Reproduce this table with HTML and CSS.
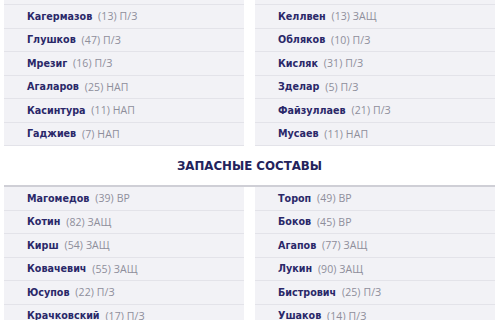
FILE: index.html
```html
<!DOCTYPE html>
<html lang="ru">
<head>
<meta charset="utf-8">
<link rel="stylesheet" href="styles.css">
</head>
<body>
<div class="page">
  <div class="teams">
    <div class="team">
      <div class="stub"></div>
      <div class="row"><b>Кагермазов</b> (13) П/З</div>
      <div class="row"><b>Глушков</b> (47) П/З</div>
      <div class="row"><b>Мрезиг</b> (16) П/З</div>
      <div class="row"><b>Агаларов</b> (25) НАП</div>
      <div class="row"><b>Касинтура</b> (11) НАП</div>
      <div class="row"><b>Гаджиев</b> (7) НАП</div>
    </div>
    <div class="team">
      <div class="stub"></div>
      <div class="row"><b>Келлвен</b> (13) ЗАЩ</div>
      <div class="row"><b>Обляков</b> (10) П/З</div>
      <div class="row"><b>Кисляк</b> (31) П/З</div>
      <div class="row"><b>Зделар</b> (5) П/З</div>
      <div class="row"><b>Файзуллаев</b> (21) П/З</div>
      <div class="row"><b>Мусаев</b> (11) НАП</div>
    </div>
  </div>
  <h2 class="title">ЗАПАСНЫЕ СОСТАВЫ</h2>
  <div class="teams subs">
    <div class="team">
      <div class="row"><b>Магомедов</b> (39) ВР</div>
      <div class="row"><b>Котин</b> (82) ЗАЩ</div>
      <div class="row"><b>Кирш</b> (54) ЗАЩ</div>
      <div class="row"><b>Ковачевич</b> (55) ЗАЩ</div>
      <div class="row"><b>Юсупов</b> (22) П/З</div>
      <div class="row"><b>Крачковский</b> (17) П/З</div>
    </div>
    <div class="team">
      <div class="row"><b>Тороп</b> (49) ВР</div>
      <div class="row"><b>Боков</b> (45) ВР</div>
      <div class="row"><b>Агапов</b> (77) ЗАЩ</div>
      <div class="row"><b>Лукин</b> (90) ЗАЩ</div>
      <div class="row"><b>Бистрович</b> (25) П/З</div>
      <div class="row"><b>Ушаков</b> (14) П/З</div>
    </div>
  </div>
</div>
</body>
</html>
```
FILE: styles.css
```css
html, body {
  margin: 0;
  padding: 0;
  background: #ffffff;
  overflow: hidden;
}
.page {
  width: 500px;
  height: 320px;
  padding: 0 5px 0 4px;
  box-sizing: border-box;
  font-family: "Open Sans", sans-serif;
}
.teams {
  display: grid;
  grid-template-columns: 1fr 1fr;
  column-gap: 11px;
}
.team {
  display: flex;
  flex-direction: column;
}
.stub {
  height: 4px;
  background: #f2f2f6;
  border-bottom: 1px solid #e3e3e9;
}
.row {
  height: 22.5px;
  display: flex;
  align-items: center;
  gap: 3px;
  padding-left: 23px;
  background: #f2f2f6;
  border-bottom: 1px solid #e3e3e9;
  font-size: 10.5px;
  color: #8e8e9b;
  white-space: pre;
  letter-spacing: 0.1px;
}
.row b {
  font-family: "DejaVu Sans", sans-serif;
  font-size: 9.6px;
  font-weight: 700;
  letter-spacing: 0;
  color: #2a2869;
}
.title {
  margin: 0;
  height: 39px;
  display: flex;
  align-items: center;
  justify-content: center;
  padding-top: 1px;
  box-sizing: border-box;
  font-family: "DejaVu Sans", sans-serif;
  font-size: 11.8px;
  font-weight: 700;
  color: #23235c;
}
.subs {
  border-top: 2px solid #cfcfd6;
}
```
